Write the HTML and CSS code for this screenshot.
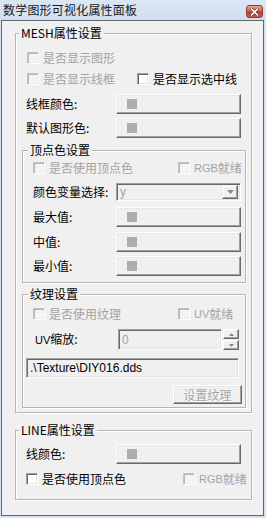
FILE: index.html
```html
<!DOCTYPE html>
<html>
<head>
<meta charset="utf-8">
<link rel="stylesheet" href="styles.css">
</head>
<body>
<div class="window">
  <div class="titlebar">
    <span class="title">数学图形可视化属性面板</span>
    <span class="close">
      <svg width="9" height="8" viewBox="0 0 9 8">
        <path d="M1.5 1 L7.5 7 M7.5 1 L1.5 7" stroke="#6b2b22" stroke-width="3" stroke-linecap="square"/>
        <path d="M1.5 1 L7.5 7 M7.5 1 L1.5 7" stroke="#ffffff" stroke-width="1.6" stroke-linecap="square"/>
      </svg>
    </span>
  </div>
  <div class="client">
    <div class="group mesh">
      <div class="legend">MESH属性设置</div>
      <div class="cbrow r-first mesh-pad">
        <label class="cb disabled"><span class="box"></span>是否显示图形</label>
      </div>
      <div class="cbrow mesh-pad">
        <label class="cb disabled w110"><span class="box"></span>是否显示线框</label>
        <label class="cb"><span class="box"></span>是否显示选中线</label>
      </div>
      <div class="lblrow mesh-lbl mt5">
        <span class="lbl w90">线框颜色:</span>
        <span class="btn colorbtn"><i class="swatch"></i></span>
      </div>
      <div class="lblrow mesh-lbl mt4">
        <span class="lbl w90">默认图形色:</span>
        <span class="btn colorbtn"><i class="swatch"></i></span>
      </div>

      <div class="group sub vertex">
        <div class="legend sublegend">顶点色设置</div>
        <div class="cbrow sub-pad mt1">
          <label class="cb disabled w145"><span class="box"></span>是否使用顶点色</label>
          <label class="cb disabled"><span class="box"></span><span class="latin">RGB</span>就绪</label>
        </div>
        <div class="lblrow sub-lbl combo-row">
          <span class="lbl w83">颜色变量选择:</span>
          <span class="combo"><span class="combo-text">y</span><span class="drop"><svg width="7" height="4" viewBox="0 0 7 4"><path d="M0 0 H7 L3.5 4 Z" fill="#8a8a8a"/></svg></span></span>
        </div>
        <div class="lblrow sub-lbl mt6">
          <span class="lbl w83">最大值:</span>
          <span class="btn colorbtn"><i class="swatch"></i></span>
        </div>
        <div class="lblrow sub-lbl mt5">
          <span class="lbl w83">中值:</span>
          <span class="btn colorbtn"><i class="swatch"></i></span>
        </div>
        <div class="lblrow sub-lbl mt4">
          <span class="lbl w83">最小值:</span>
          <span class="btn colorbtn"><i class="swatch"></i></span>
        </div>
      </div>

      <div class="group sub texture">
        <div class="legend sublegend">纹理设置</div>
        <div class="cbrow sub-pad mt3">
          <label class="cb disabled w145"><span class="box"></span>是否使用纹理</label>
          <label class="cb disabled"><span class="box"></span><span class="latin">UV</span>就绪</label>
        </div>
        <div class="lblrow uv-row">
          <span class="lbl w83"><span class="latin">UV</span>缩放:</span>
          <span class="spin-edit"><span class="edit-text">0</span></span>
          <span class="spin">
            <span class="spin-btn"><svg width="5" height="3" viewBox="0 0 5 3"><path d="M0 3 H5 L2.5 0 Z" fill="#8a8a8a"/></svg></span>
            <span class="spin-btn"><svg width="5" height="3" viewBox="0 0 5 3"><path d="M0 0 H5 L2.5 3 Z" fill="#8a8a8a"/></svg></span>
          </span>
        </div>
        <div class="path-edit">.\Texture\DIY016.dds</div>
        <div class="btnline">
          <span class="btn textbtn">设置纹理</span>
        </div>
      </div>
    </div>

    <div class="group line">
      <div class="legend">LINE属性设置</div>
      <div class="lblrow mesh-lbl line-first">
        <span class="lbl w90">线颜色:</span>
        <span class="btn colorbtn"><i class="swatch"></i></span>
      </div>
      <div class="cbrow line-pad mt5">
        <label class="cb w157"><span class="box"></span>是否使用顶点色</label>
        <label class="cb disabled"><span class="box"></span><span class="latin">RGB</span>就绪</label>
      </div>
    </div>
  </div>
</div>
</body>
</html>
```

FILE: styles.css
```css
html, body {
  margin: 0;
  padding: 0;
}
body {
  width: 266px;
  height: 518px;
  background: #d5e2f1;
  font-family: "Noto Sans CJK SC", "Noto Sans", sans-serif;
  font-size: 12px;
  color: #000;
  overflow: hidden;
}
.window {
  width: 266px;
  height: 518px;
  display: flex;
  flex-direction: column;
}
.titlebar {
  height: 20px;
  display: flex;
  align-items: center;
  padding-left: 3px;
  position: relative;
  background: linear-gradient(#dbe7f5, #cfdef0);
}
.title {
  color: #1a1a1a;
  font-size: 12px;
  line-height: 14px;
  letter-spacing: 0.2px;
}
.close {
  position: absolute;
  left: 246px;
  top: 5px;
  width: 17px;
  height: 13px;
  box-sizing: border-box;
  border: 1px solid #8a3b30;
  border-radius: 3px;
  background: linear-gradient(#e8a394, #cf6a57 45%, #b8412f 55%, #c95a45);
  display: flex;
  align-items: center;
  justify-content: center;
}
.client {
  margin-left: 1px;
  width: 263px;
  height: 496px;
  box-sizing: border-box;
  border: 1px solid #5f6670;
  background: #f0f0f0;
  display: flex;
  flex-direction: column;
  align-items: flex-start;
}
.group {
  box-sizing: border-box;
  border: 1px solid #b5b5b5;
  box-shadow: 1px 1px 0 #ffffff, inset 1px 1px 0 #ffffff;
}
.mesh {
  margin: 12px 0 0 13px;
  width: 237px;
  padding-bottom: 4px;
}
.line {
  margin: 17px 0 0 13px;
  width: 237px;
  padding-bottom: 10px;
}
.sub {
  margin-left: 6px;
  width: 224px;
}
.vertex {
  margin-top: 12px;
  padding-bottom: 6px;
}
.texture {
  margin-top: 11px;
  padding-bottom: 3px;
}
.legend {
  width: fit-content;
  height: 14px;
  line-height: 14px;
  margin: -8px 0 0 3px;
  padding: 0 2px;
  background: #f0f0f0;
  white-space: nowrap;
}
.sublegend {
  margin-left: 5px;
}
.latin {
  font-family: "Liberation Sans", "Noto Sans", sans-serif;
  font-size: 11px;
}
.cbrow {
  display: flex;
  align-items: center;
  height: 21px;
}
.r-first { margin-top: 7px; }
.mesh-pad { padding-left: 11px; }
.sub-pad { padding-left: 10px; height: 20px; }
.line-pad { padding-left: 10px; height: 20px; }
.cb {
  display: flex;
  align-items: center;
  white-space: nowrap;
  line-height: 14px;
  color: #000;
}
.cb.disabled { color: #a3a3a3; }
.w110 { width: 110px; }
.w145 { width: 145px; }
.w157 { width: 157px; }
.box {
  width: 12px;
  height: 12px;
  box-sizing: border-box;
  margin-right: 4px;
  border: 1px solid;
  border-color: #a0a0a0 #ffffff #ffffff #a0a0a0;
  box-shadow: inset 1px 1px 0 #696969, inset -1px -1px 0 #e3e3e3;
  background: #ffffff;
  flex: none;
}
.cb.disabled .box {
  border-color: #c4c4c4 #ffffff #ffffff #c4c4c4;
  box-shadow: inset 1px 1px 0 #b4b4b4, inset -1px -1px 0 #ececec;
  background: #f4f4f4;
}
.lblrow {
  display: flex;
  align-items: center;
}
.mesh-lbl { padding-left: 10px; height: 20px; }
.sub-lbl { padding-left: 10px; height: 20px; }
.lbl {
  white-space: nowrap;
  line-height: 14px;
  flex: none;
}
.w90 { width: 90px; }
.w83 { width: 83px; }
.mt1 { margin-top: 1px; }
.mt3 { margin-top: 3px; }
.mt4 { margin-top: 4px; }
.mt5 { margin-top: 5px; }
.mt6 { margin-top: 6px; }
.line-first { margin-top: 7px; }
.btn {
  box-sizing: border-box;
  border: 1px solid;
  border-color: #ffffff #696969 #696969 #ffffff;
  box-shadow: inset -1px -1px 0 #a0a0a0, inset 1px 1px 0 #e8e8e8;
  background: #f0f0f0;
  display: flex;
  align-items: center;
}
.colorbtn {
  width: 125px;
  height: 20px;
  padding-left: 10px;
}
.swatch {
  display: block;
  width: 10px;
  height: 10px;
  background: #adadad;
}
.combo-row {
  height: 18px;
  margin-top: 5px;
}
.combo {
  width: 125px;
  height: 18px;
  box-sizing: border-box;
  border: 1px solid;
  border-color: #a0a0a0 #ffffff #ffffff #a0a0a0;
  box-shadow: inset 1px 1px 0 #696969, inset -1px -1px 0 #e3e3e3;
  background: #f0f0f0;
  display: flex;
  align-items: center;
  justify-content: space-between;
  padding: 2px 2px 2px 3px;
}
.combo-text {
  color: #a3a3a3;
  font-family: "Liberation Sans", sans-serif;
  font-size: 12px;
  line-height: 12px;
}
.drop {
  width: 16px;
  height: 14px;
  box-sizing: border-box;
  border: 1px solid;
  border-color: #f0f0f0 #696969 #696969 #f0f0f0;
  box-shadow: inset -1px -1px 0 #a0a0a0, inset 1px 1px 0 #ffffff;
  background: #f0f0f0;
  display: flex;
  align-items: center;
  justify-content: center;
}
.uv-row {
  height: 21px;
  margin-top: 5px;
  padding-left: 12px;
}
.spin-edit {
  width: 104px;
  height: 21px;
  box-sizing: border-box;
  border: 1px solid;
  border-color: #a0a0a0 #ffffff #ffffff #a0a0a0;
  box-shadow: inset 1px 1px 0 #696969, inset -1px -1px 0 #e3e3e3;
  background: #f0f0f0;
  display: flex;
  align-items: center;
  padding-left: 3px;
}
.edit-text {
  color: #a3a3a3;
  font-family: "Liberation Sans", sans-serif;
  font-size: 12px;
  line-height: 12px;
}
.spin {
  margin-left: 1px;
  display: flex;
  flex-direction: column;
  gap: 1px;
}
.spin-btn {
  width: 16px;
  height: 10px;
  box-sizing: border-box;
  border: 1px solid;
  border-color: #ffffff #696969 #696969 #ffffff;
  box-shadow: inset -1px -1px 0 #a0a0a0;
  background: #f0f0f0;
  display: flex;
  align-items: center;
  justify-content: center;
}
.path-edit {
  margin: 8px 0 0 3px;
  width: 213px;
  height: 20px;
  box-sizing: border-box;
  border: 1px solid;
  border-color: #a0a0a0 #ffffff #ffffff #a0a0a0;
  box-shadow: inset 1px 1px 0 #696969, inset -1px -1px 0 #e3e3e3;
  background: #f0f0f0;
  display: flex;
  align-items: center;
  padding-left: 3px;
  font-family: "Liberation Sans", sans-serif;
  font-size: 12px;
  line-height: 14px;
}
.btnline {
  display: flex;
  justify-content: flex-end;
  padding-right: 3px;
  margin-top: 7px;
}
.textbtn {
  width: 69px;
  height: 19px;
  justify-content: center;
  color: #a3a3a3;
  text-shadow: 1px 1px 0 #ffffff;
  line-height: 14px;
}
```
